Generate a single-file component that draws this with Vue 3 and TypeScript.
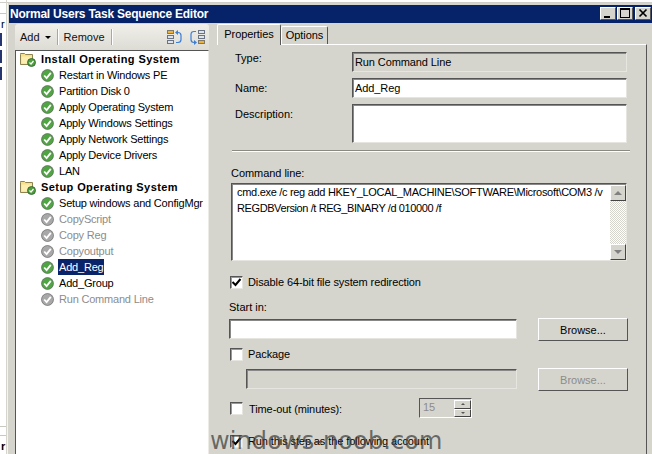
<script setup lang="ts">
interface Step { label: string; kind: 'group' | 'ok' | 'off'; selected?: boolean }
const steps: Step[] = [
  { label: 'Install Operating System', kind: 'group' },
  { label: 'Restart in Windows PE', kind: 'ok' },
  { label: 'Partition Disk 0', kind: 'ok' },
  { label: 'Apply Operating System', kind: 'ok' },
  { label: 'Apply Windows Settings', kind: 'ok' },
  { label: 'Apply Network Settings', kind: 'ok' },
  { label: 'Apply Device Drivers', kind: 'ok' },
  { label: 'LAN', kind: 'ok' },
  { label: 'Setup Operating System', kind: 'group' },
  { label: 'Setup windows and ConfigMgr', kind: 'ok' },
  { label: 'CopyScript', kind: 'off' },
  { label: 'Copy Reg', kind: 'off' },
  { label: 'Copyoutput', kind: 'off' },
  { label: 'Add_Reg', kind: 'ok', selected: true },
  { label: 'Add_Group', kind: 'ok' },
  { label: 'Run Command Line', kind: 'off' },
]
</script>

<template>
  <div class="screen">
    <div class="behind">
      <div class="behind-line l1"></div>
      <div class="behind-row r1"></div>
      <div class="behind-row r2"></div>
      <div class="behind-row r3"></div>
      <div class="behind-line l2"></div>
      <div class="behind-line l3"></div>
      <span class="behind-a">r</span>
      <span class="behind-b">r</span>
    </div>
    <div class="window">
      <div class="titlebar">
        <span class="title">Normal Users Task Sequence Editor</span>
        <div class="caption-btns">
          <div class="cap"><svg width="14" height="11" viewBox="0 0 14 11"><rect x="3" y="8" width="6" height="2" fill="#000" /></svg></div>
          <div class="cap"><svg width="14" height="11" viewBox="0 0 14 11"><path d="M2 0h10v10H2zM3 2v7h8V2z" fill="#000" fill-rule="evenodd" /></svg></div>
          <div class="cap close"><svg width="14" height="11" viewBox="0 0 14 11"><path d="M3.5 1.5l7 7M10.5 1.5l-7 7" stroke="#000" stroke-width="1.7" /></svg></div>
        </div>
      </div>
      <div class="body">
        <div class="left">
          <div class="toolbar">
            <span class="tb-item">Add <i class="caret"></i></span>
            <span class="tb-sep"></span>
            <span class="tb-item">Remove</span>
            <span class="tb-sep"></span>
            <span class="tb-fill"></span>
            <svg class="tb-icon" width="15" height="15" viewBox="0 0 15 15">
              <rect x="0.5" y="0.5" width="6" height="3" fill="#f2b233" stroke="#7d7a6a" />
              <rect x="0.5" y="5.5" width="6" height="3" fill="#dfe4ea" stroke="#6a7484" />
              <rect x="0.5" y="10.5" width="6" height="3" fill="#dfe4ea" stroke="#6a7484" />
              <path d="M10 2.5h1q3 0 3 3v4q0 3-3 3H9" fill="none" stroke="#3b7fd8" stroke-width="1.2" />
              <path d="M11 0L8 2.500l3 2.500z" fill="#3b7fd8" />
            </svg>
            <svg class="tb-icon second" width="15" height="15" viewBox="0 0 15 15">
              <rect x="8.500" y="0.5" width="6" height="3" fill="#dfe4ea" stroke="#6a7484" />
              <rect x="8.500" y="5.5" width="6" height="3" fill="#dfe4ea" stroke="#6a7484" />
              <rect x="8.500" y="10.5" width="6" height="3" fill="#f2b233" stroke="#7d7a6a" />
              <path d="M6 1.500H4q-3 0-3 3v5q0 3 3 3h1" fill="none" stroke="#3b7fd8" stroke-width="1.2" />
              <path d="M4 10l3 2.500L4 15z" fill="#3b7fd8" />
            </svg>
          </div>
          <div class="tree">
            <div v-for="s in steps" :key="s.label" class="row" :class="s.kind">
              <svg v-if="s.kind === 'group'" class="folder" width="16" height="16" viewBox="0 0 16 16">
                <path d="M0.5 3.5V2.5h4l1 1h7v10h-12z" fill="#f6e08a" stroke="#8f8350" />
                <path d="M1.5 5.5h10v7h-10z" fill="#fbeeb0" />
                <circle cx="11.5" cy="11.5" r="4" fill="#4e9e3e" stroke="#2c5f2c" stroke-width=".8" />
                <path d="M9.500 11.500l1.500 1.500 2.500-3" fill="none" stroke="#fff" stroke-width="1.2" />
              </svg>
              <svg v-else class="check" width="13" height="13" viewBox="0 0 13 13">
                <circle cx="6.500" cy="6.500" r="6" :fill="s.kind === 'ok' ? '#4fa542' : '#a8a8a8'" stroke="#555" stroke-width=".6" />
                <path d="M3.200 6.500l2.400 2.600 4.200-5.200" fill="none" stroke="#fff" stroke-width="1.800" />
              </svg>
              <span class="label" :class="{ sel: s.selected }">{{ s.label }}</span>
            </div>
          </div>
        </div>
        <div class="right">
          <div class="tabs">
            <span class="tab active">Properties</span>
            <span class="tab">Options</span>
          </div>
          <div class="panel">
            <div class="field first">
              <span class="f-label">Type:</span>
              <div class="inset gray">Run Command Line</div>
            </div>
            <div class="field second">
              <span class="f-label">Name:</span>
              <div class="inset">Add_Reg</div>
            </div>
            <div class="field third">
              <span class="f-label">Description:</span>
              <div class="inset tall"></div>
            </div>
            <div class="rule"></div>
            <div class="cmd-label">Command line:</div>
            <div class="cmd">
              <div class="cmd-text">
                <div class="cl1">cmd.exe /c reg add HKEY_LOCAL_MACHINE\SOFTWARE\Microsoft\COM3 /v</div>
                <div class="cl2">REGDBVersion /t REG_BINARY /d 010000 /f</div>
              </div>
              <div class="scroll">
                <div class="sbtn"><i class="up"></i></div>
                <div class="strack"></div>
                <div class="sbtn"><i class="down"></i></div>
              </div>
            </div>
            <label class="chk-row disable"><span class="chk"><svg width="11" height="11" viewBox="0 0 11 11"><path d="M1.500 5l3 3 5-6" fill="none" stroke="#000" stroke-width="2" /></svg></span>Disable 64-bit file system redirection</label>
            <div class="start-label">Start in:</div>
            <div class="line">
              <div class="inset wide"></div>
              <div class="btn">Browse...</div>
            </div>
            <label class="chk-row pkg"><span class="chk"></span>Package</label>
            <div class="line indented">
              <div class="inset gray pkg-box"></div>
              <div class="btn disabled">Browse...</div>
            </div>
            <div class="timeout">
              <label class="chk-row"><span class="chk"></span><span class="to-label">Time-out (minutes):</span></label>
              <div class="spin">
                <span class="spin-val">15</span>
                <div class="spin-btns"><div class="sp"><i class="up tiny"></i></div><div class="sp"><i class="down tiny"></i></div></div>
              </div>
            </div>
            <label class="chk-row run"><span class="chk"><svg width="11" height="11" viewBox="0 0 11 11"><path d="M1.500 5l3 3 5-6" fill="none" stroke="#000" stroke-width="2" /></svg></span>Run this step as the following account</label>
          </div>
        </div>
      </div>
    </div>
    <div class="watermark">windows-noob.com</div>
  </div>
</template>

<style>
html, body { margin: 0; background: #fff; }
</style>

<style scoped>
.screen {
  position: relative;
  width: 652px;
  height: 454px;
  overflow: hidden;
  background: #fff;
  font-family: "Liberation Sans", Arial, sans-serif;
  font-size: 11px;
  color: #000;
  border-top: 0;
}
.screen::before {
  content: "";
  position: absolute;
  left: 0;
  right: 0;
  top: 2px;
  height: 1px;
  background: #cfcec8;
}
.behind { position: absolute; left: 0; top: 0; width: 7px; height: 454px; border-right: 1px solid #d6d5cd; box-sizing: border-box; }
.behind-row { position: absolute; left: 0; width: 2px; height: 13px; background: #26356e; }
.r1 { top: 33px; }
.r2 { top: 50px; }
.r3 { top: 67px; }
.behind-line { position: absolute; left: 0; width: 6px; height: 1px; background: #c8c7c0; }
.l1 { top: 13px; }
.l2 { top: 426px; }
.l3 { top: 435px; }
.behind-a { position: absolute; left: 1px; top: 18px; }
.behind-b { position: absolute; left: 1px; top: 440px; font-weight: 700; }
.window {
  position: absolute;
  left: 7px;
  top: 3px;
  width: 660px;
  height: 470px;
  background: #d6d5cd;
  border-left: 1px solid #f4f4f0;
  box-sizing: border-box;
  padding: 2px 0 0 1px;
}
.titlebar {
  height: 18px;
  width: 643px;
  background: #062268;
  color: #fff;
  font-size: 12px;
  font-weight: 700;
  display: flex;
  align-items: center;
  padding-left: 1px;
  box-sizing: border-box;
  position: relative;
  letter-spacing: -.23px;
}
.caption-btns { position: absolute; right: 1px; top: 2px; display: flex; gap: 1px; }
.cap {
  width: 14px;
  height: 11px;
  background: #d6d5cd;
  border: 1px solid;
  border-color: #fff #555 #555 #fff;
  display: flex;
}
.cap.close { margin-left: 1px; }
.body { display: flex; }
.left { width: 201px; margin-left: 6px; flex: none; }
.toolbar {
  height: 26px;
  width: 194px;
  margin-top: 1px;
  display: flex;
  align-items: center;
  background: linear-gradient(#f0efe9, #dcdbd4);
  border-radius: 3px 3px 0 0;
  color: #111;
}
.tb-item { padding: 0 6px 0 5px; display: inline-flex; align-items: center; gap: 5px; }
.caret { width: 0; height: 0; border: 3px solid transparent; border-top: 3px solid #000; border-bottom: 0; margin-top: 1px; }
.tb-sep { width: 1px; height: 16px; background: #a9a8a0; border-right: 1px solid #fff; }
.tb-fill { flex: 1; }
.tb-icon { flex: none; margin-right: 8px; }
.tb-icon.second { margin-right: 4px; }
.tree {
  width: 194px;
  height: 410px;
  background: #fff;
  border: 1px solid;
  border-color: #555 #ecebe6 #fff #555;
  box-sizing: border-box;
}
.row { height: 16px; display: flex; align-items: center; white-space: nowrap; }
.row.group { padding-left: 4px; font-weight: 700; letter-spacing: .42px; }
.row.ok, .row.off { padding-left: 25px; letter-spacing: -.2px; }
.row.off { color: #8c8c8c; }
.folder { flex: none; margin-right: 4px; }
.check { flex: none; margin-right: 4px; }
.label { padding: 0 1px; line-height: 16px; }
.label.sel { background: #0a246a; color: #fff; }
.right { flex: 1; margin-left: 1px; position: relative; }
.tabs { display: flex; height: 21px; align-items: flex-end; letter-spacing: -.08px; }
.tab {
  width: 47px;
  height: 18px;
  line-height: 17px;
  text-align: center;
  background: #d6d5cd;
  border: 1px solid;
  border-color: #fff #555 transparent #fff;
  border-bottom: 0;
  border-radius: 2px 2px 0 0;
  box-sizing: border-box;
}
.tab.active { width: 64px; height: 21px; line-height: 18px; position: relative; z-index: 1; margin-bottom: -1px; }
.panel {
  width: 430px;
  height: 420px;
  border-top: 1px solid #fff;
  border-right: 1px solid #555;
  box-sizing: border-box;
  position: relative;
}
.field { display: flex; }
.f-label { width: 135px; padding-left: 18px; box-sizing: border-box; flex: none; line-height: 13px; }
.field.first { padding-top: 7px; }
.field.second { padding-top: 6px; }
.field.second .f-label { padding-top: 4px; }
.field.third { padding-top: 6px; }
.field.third .f-label { padding-top: 4px; }
.inset {
  width: 275px;
  height: 20px;
  box-sizing: border-box;
  background: #fff;
  border: 1px solid;
  border-color: #555 #e6e5df #e6e5df #555;
  box-shadow: inset 1px 1px 0 #888;
  padding: 2px 0 0 2px;
  line-height: 15px;
  letter-spacing: -.1px;
}
.inset.gray { background: #d6d5cd; }
.inset.tall { height: 39px; }
.rule { width: 398px; height: 1px; background: #8a8984; border-bottom: 1px solid #fff; margin: 7px 0 0 15px; }
.cmd-label { padding: 15px 0 0 14px; line-height: 13px; letter-spacing: -.05px; }
.cmd {
  display: flex;
  width: 396px;
  height: 78px;
  margin: 3px 0 0 14px;
  background: #fff;
  border: 1px solid;
  border-color: #555 #e6e5df #e6e5df #555;
  box-shadow: inset 1px 1px 0 #888;
  box-sizing: border-box;
}
.cmd-text { flex: 1; padding-left: 5px; line-height: 16px; white-space: nowrap; min-width: 0; }
.cl1 { letter-spacing: -.3px; }
.cl2 { letter-spacing: -.4px; }
.scroll { width: 16px; margin-top: 1px; flex: none; display: flex; flex-direction: column; }
.strack {
  flex: 1;
  background-image: repeating-conic-gradient(#d6d5cd 0 25%, #fff 0 50%);
  background-size: 2px 2px;
}
.sbtn {
  height: 16px;
  box-sizing: border-box;
  background: #d6d5cd;
  border: 1px solid;
  border-color: #fff #444 #444 #fff;
  display: flex;
  align-items: center;
  justify-content: center;
}
.up { width: 0; height: 0; border: 4px solid transparent; border-bottom: 4px solid #808080; border-top: 0; }
.down { width: 0; height: 0; border: 4px solid transparent; border-top: 4px solid #808080; border-bottom: 0; }
.up.tiny { border-width: 2px; border-top: 0; border-bottom: 2px solid #555; }
.down.tiny { border-width: 2px; border-bottom: 0; border-top: 2px solid #555; }
.chk-row { display: flex; align-items: center; line-height: 13px; letter-spacing: -.1px; white-space: nowrap; }
.chk {
  width: 13px;
  height: 13px;
  box-sizing: border-box;
  flex: none;
  margin-right: 5px;
  background: #fff;
  border: 1px solid;
  border-color: #555 #e6e5df #e6e5df #555;
  box-shadow: inset 1px 1px 0 #999;
  display: flex;
  align-items: center;
  justify-content: center;
}
.chk-row.disable { padding: 15px 0 0 13px; }
.start-label { padding: 12px 0 0 12px; line-height: 13px; }
.line { display: flex; align-items: flex-start; margin-top: 5px; padding-left: 12px; }
.inset.wide { width: 288px; height: 20px; }
.btn {
  width: 90px;
  height: 23px;
  margin: -1px 0 0 21px;
  box-sizing: border-box;
  background: #d6d5cd;
  border: 1px solid;
  border-color: #fff #555 #555 #fff;
  display: flex;
  align-items: center;
  justify-content: center;
}
.btn.disabled { color: #8c8c8c; }
.chk-row.pkg { padding: 7px 0 0 13px; }
.line.indented { padding-left: 29px; margin-top: 8px; }
.pkg-box { width: 271px; height: 20px; }
.timeout { display: flex; align-items: center; padding: 11px 0 0 13px; position: relative; }
.to-label { position: relative; top: 1px; margin-left: 1px; }
.spin {
  position: absolute;
  left: 202px;
  top: 7px;
  width: 53px;
  height: 20px;
  box-sizing: border-box;
  border: 1px solid;
  border-color: #555 #fff #fff #555;
  display: flex;
  justify-content: space-between;
  color: #8c8c8c;
  padding: 2px 0 0 3px;
}
.spin-btns { width: 17px; margin-top: -1px; display: flex; flex-direction: column; }
.sp {
  height: 8px;
  background: #d6d5cd;
  border: 1px solid;
  border-color: #fff #444 #444 #fff;
  display: flex;
  align-items: center;
  justify-content: center;
}
.chk-row.run { padding: 20px 0 0 13px; }
.watermark {
  position: absolute;
  left: 210px;
  top: 429px;
  font-family: "DejaVu Sans", sans-serif;
  font-size: 24px;
  line-height: 25px;
  color: rgba(60, 60, 60, .72);
  white-space: nowrap;
  letter-spacing: .1px;
}
</style>
